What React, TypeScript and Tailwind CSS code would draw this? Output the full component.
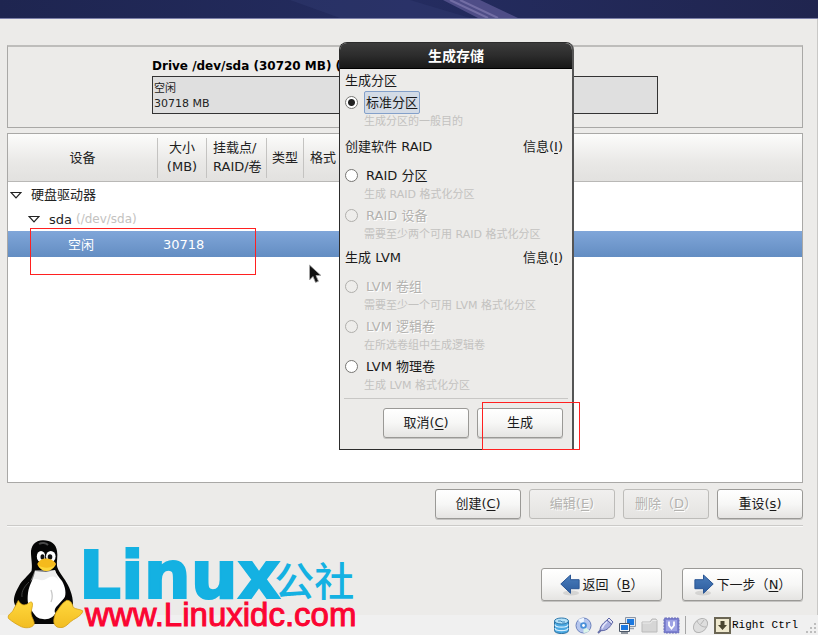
import React from "react";

const FONT = "font-['DejaVu_Sans','Noto_Sans_CJK_SC',sans-serif]";

const BTN =
  "flex items-center justify-center rounded-[3px] border bg-linear-to-b text-[13px] leading-[18px] whitespace-nowrap";
const BTN_ON =
  "border-[#9a9996] from-white via-[#f7f7f6] to-[#e5e4e2] text-[#1a1a1a] shadow-[0_1px_0_#c4c3c1]";
const BTN_OFF =
  "border-[#bdbcb9] from-[#f1f0ef] to-[#e4e3e1] text-[#b3b2af] [text-shadow:1px_1px_0_#fff]";

function Key({ children }: { children: string }) {
  return <span className="underline underline-offset-2">{children}</span>;
}

function ToolButton({ disabled, children }: { disabled?: boolean; children: React.ReactNode }) {
  return (
    <button
      type="button"
      disabled={disabled}
      className={`${BTN} h-[30px] w-[86px] ${disabled ? BTN_OFF : BTN_ON}`}
    >
      <span>{children}</span>
    </button>
  );
}

function Arrow({ flip }: { flip?: boolean }) {
  return (
    <svg width="20" height="22" viewBox="0 0 20 22" className={flip ? "-scale-x-100" : ""} aria-hidden="true">
      <defs>
        <linearGradient id={flip ? "arrowR" : "arrowL"} x1="0" y1="0" x2="0" y2="1">
          <stop offset="0" stopColor="#4a7dbb" />
          <stop offset="1" stopColor="#2c5c9e" />
        </linearGradient>
      </defs>
      <ellipse cx="11" cy="19" rx="8" ry="2.5" fill="#000" opacity=".1" />
      <path
        d="M.8 10 10.5 1v4.700h8.600v9h-8.600v4.600Z"
        fill={flip ? "url(#arrowR)" : "url(#arrowL)"}
        stroke="#2a5694"
        strokeWidth="1"
        strokeLinejoin="round"
      />
    </svg>
  );
}

function Triangle() {
  return (
    <svg width="12" height="8" viewBox="0 0 12 8" className="shrink-0" aria-hidden="true">
      <path d="M1 1.500h10L6 6.800Z" fill="#fff" stroke="#222" strokeWidth="1.200" />
    </svg>
  );
}

type OptionProps = {
  id: string;
  label: string;
  hint: string;
  checked?: boolean;
  disabled?: boolean;
};

function Option({ id, label, hint, checked, disabled }: OptionProps) {
  return (
    <div>
      <div className="flex h-[22px] items-center">
        <input
          id={id}
          type="radio"
          name="storage"
          defaultChecked={checked}
          disabled={disabled}
          className="size-[13px] shrink-0 appearance-none rounded-full border border-[#777673] bg-white checked:bg-[radial-gradient(circle,#222_0_3px,#fff_4px)] disabled:border-[#b0afac] disabled:bg-[#eeedeb]"
        />
        <label
          htmlFor={id}
          className={`ml-[6px] border px-px text-[13px] leading-[21px] ${
            checked ? "rounded-[2px] border-[#83a0ca] bg-[#d3dbe6]" : "border-transparent"
          } ${disabled ? "text-[#b3b2af] [text-shadow:1px_1px_0_#fff]" : "text-[#1a1a1a]"}`}
        >
          {label}
        </label>
      </div>
      <p className="pl-[19px] text-[11px] leading-[18px] text-[#c3c2c0]">{hint}</p>
    </div>
  );
}

function SectionHead({ title, info }: { title: string; info?: boolean }) {
  return (
    <div className="flex justify-between pr-[4px] text-[13px] leading-[18px]">
      <h2>{title}</h2>
      {info && (
        <button type="button" className="leading-[18px]">
          信息(<Key>I</Key>)
        </button>
      )}
    </div>
  );
}

function StorageDialog() {
  return (
    <section
      role="dialog"
      aria-label="生成存储"
      className="absolute top-[42px] left-[339px] w-[235px] rounded-t-[8px] border border-[#2c2c2c] border-r-2 border-r-[#555] bg-[#ecebe9]"
    >
      <h1 className="h-[26px] rounded-t-[7px] border-b border-black bg-linear-to-b from-[#3c3c3c] via-[#2c2c2c] to-[#181818] text-center text-[14px] leading-[26px] font-bold text-white">
        生成存储
      </h1>
      <div className="px-[5px] pt-[3px]">
        <div className="pb-px">
          <SectionHead title="生成分区" />
        </div>
        <Option id="std" label="标准分区" hint="生成分区的一般目的" checked />
        <div className="pt-[7px] pb-[8px]">
          <SectionHead title="创建软件 RAID" info />
        </div>
        <Option id="raidp" label="RAID 分区" hint="生成 RAID 格式化分区" />
        <Option id="raidd" label="RAID 设备" hint="需要至少两个可用 RAID 格式化分区" disabled />
        <div className="pt-[5px] pb-[8px]">
          <SectionHead title="生成 LVM" info />
        </div>
        <Option id="vg" label="LVM 卷组" hint="需要至少一个可用 LVM 格式化分区" disabled />
        <Option id="lv" label="LVM 逻辑卷" hint="在所选卷组中生成逻辑卷" disabled />
        <Option id="pv" label="LVM 物理卷" hint="生成 LVM 格式化分区" />
      </div>
      <div className="mx-[4px] mt-[3px] flex justify-end gap-[8px] border-t border-[#c8c7c5] pt-[9px] pr-[5px] pb-[11px]">
        <ToolButton>
          取消(<Key>C</Key>)
        </ToolButton>
        <ToolButton>生成</ToolButton>
      </div>
    </section>
  );
}

const TH = "border-r border-[#c4c3c1] p-0 text-center font-normal";

function DeviceTable() {
  return (
    <div className="h-[350px] border border-[#a9a8a6] bg-white">
      <table className="w-full table-fixed border-separate border-spacing-0 text-[13px] leading-[19px] text-[#222]">
        <thead>
          <tr className="h-[48px] bg-linear-to-b from-[#fcfcfb] from-0% via-[#e9e8e6] via-60% to-[#e2e1df]">
            <th scope="col" className="w-[150px] border-b border-b-[#b9b8b6] p-0 font-normal">
              <div className={`${TH} flex h-[40px] items-center justify-center`}>设备</div>
            </th>
            <th scope="col" className="w-[49px] border-b border-b-[#b9b8b6] p-0 font-normal">
              <div className={`${TH} h-[40px]`}>大小<br />(MB)</div>
            </th>
            <th scope="col" className="w-[60px] border-b border-b-[#b9b8b6] p-0 font-normal">
              <div className={`${TH} h-[40px] pl-[6px] text-left whitespace-nowrap`}>挂载点/<br />RAID/卷</div>
            </th>
            <th scope="col" className="w-[37px] border-b border-b-[#b9b8b6] p-0 font-normal">
              <div className={`${TH} flex h-[40px] items-center justify-center`}>类型</div>
            </th>
            <th scope="col" className="border-b border-b-[#b9b8b6] p-0 pl-[6px] text-left font-normal">格式</th>
          </tr>
        </thead>
        <tbody>
          <tr className="h-[25px]">
            <td className="p-0" colSpan={5}>
              <span className="flex items-center gap-[9px] pl-[2px]"><Triangle />硬盘驱动器</span>
            </td>
          </tr>
          <tr className="h-[24px]">
            <td className="p-0" colSpan={5}>
              <span className="flex items-center pl-[20px]">
                <Triangle />
                <span className="ml-[9px]">sda</span>
                <span className="ml-[4px] text-[12px] text-[#c3c2c0]">(/dev/sda)</span>
              </span>
            </td>
          </tr>
          <tr className="h-[26px] bg-linear-to-b from-[#80a6d9] to-[#638dc2] text-white">
            <td className="p-0 pl-[60px]">空闲</td>
            <td className="p-0 pl-[5px]">30718</td>
            <td colSpan={3} />
          </tr>
        </tbody>
      </table>
    </div>
  );
}

function Tux() {
  return (
    <svg width="78" height="90" viewBox="0 0 78 90" aria-hidden="true">
      <defs>
        <linearGradient id="foot" x1="0" y1="0" x2="0" y2="1">
          <stop offset="0" stopColor="#ffd83d" />
          <stop offset="1" stopColor="#f2bd22" />
        </linearGradient>
      </defs>
      <path
        d="M36 .3C28 .3 23.500 6 24 14c.5 8 1.500 12 .5 17C21 36 15 40 12 46 9 51 6.500 57 7 62c2 9 10 18 19 22h24c9-3 15-12 16-20 0-9-4-18-8-24-3-5-7-9-8-14-.5-5 1-10 0-15C49 4 44 .3 36 .3Z"
        fill="#060606"
      />
      <path d="M28 31c-1 8-6 13-7 22-1 8 0 14 4 18 3 5 6 8 11 8 6 1 11-2 13-7 3-5 5-8 8-13 3-5 1-13-2-18-3-4-6-7-7-11l-9 2Z" fill="#fff" />
      <path d="M23 42c5-7 10 1 16-3 6-4 10-3 13 2-2-4-3-8-4-11H28Z" fill="#dedede" opacity=".5" />
      <path d="M44 50c1.500 4 2 8 0 12" stroke="#c8c8c8" strokeWidth="1.300" fill="none" />
      <path d="M15 57c-1-6 3-11 7-15" stroke="#555" strokeWidth="1" fill="none" opacity=".7" />
      <path d="M48 73c-1-3 0-5 3-8l9-10 5 6-9 8Z" fill="#060606" />
      <ellipse cx="34" cy="16.500" rx="4.200" ry="5.500" fill="#fff" />
      <ellipse cx="43.800" cy="16.500" rx="4.800" ry="5.500" fill="#fff" />
      <ellipse cx="35.500" cy="17" rx="2" ry="2.800" fill="#111" />
      <ellipse cx="43" cy="17" rx="2.300" ry="2.800" fill="#111" />
      <path d="M30.300 24c2-4 5-5.500 9-5.500 4 0 8.700 2.500 9.700 5.500-1 3.500-6 7-9.400 7-3.600 0-8.600-3.500-9.300-7Z" fill="#f5ba1c" />
      <path d="M31 25c5 3.500 12 3.500 17 0-1 3-5.500 6-8.400 6-3.600 0-7.600-3-8.600-6Z" fill="#fdd63a" />
      <path d="M32 4c3-2 7-1 9 1" stroke="#777" strokeWidth="2" fill="none" opacity=".6" />
      <path
        d="M11.300 60.500c2 3 4 5.500 8 4 3-1.500 5-4 6-1.500.8 3-1 6-1.300 10 .5 5 4 8 3 11.500-2 3.500-8 4-12.500 2.300-4-2-9-4.800-13-8.300-1.500-4 3-5 4.500-8Z"
        fill="url(#foot)"
        stroke="#d49f14"
        strokeWidth=".8"
      />
      <path
        d="M59.700 60.300c4 0 5.500 3 6.500 7 2 2 7.500 2 9.500 3.500 0 3-4 6-9.500 9-4 2.500-6 6-10 7.500-3 .5-6 .3-7.500-1.300-3-3-2-8 0-13 3-4 6-10 11-12.700Z"
        fill="url(#foot)"
        stroke="#d49f14"
        strokeWidth=".8"
      />
    </svg>
  );
}

function Watermark() {
  return (
    <div className="flex items-start">
      <Tux />
      <div className="whitespace-nowrap">
        <div className="-ml-[6px] flex h-[60px] items-start text-[#14b1e2]">
          <span className="text-[66px] leading-[72px] font-bold [-webkit-text-stroke:2px_#14b1e2]">Linux</span>
          <span className="-ml-[6px] pt-[16px] text-[40px] leading-[52px] font-medium">公社</span>
        </div>
        <div className="font-['Liberation_Sans',sans-serif] text-[33px] leading-[30px] text-[#fb0532] [-webkit-text-stroke:1px_#fb0532]">
          www.Linuxidc.com
        </div>
      </div>
    </div>
  );
}

function StatusIcons() {
  return (
    <div className="flex items-center gap-[5px]">
      <svg width="17" height="17" viewBox="0 0 17 17" aria-hidden="true">
        <path d="M1.500 4v9.500c0 4 14 4 14 0V4" fill="#4ba9e2" stroke="#2a6f9f" />
        <path d="M2 7.500c0 3.500 13 3.500 13 0M2 11c0 3.500 13 3.500 13 0" stroke="#d6efff" fill="none" strokeWidth="1.200" />
        <ellipse cx="8.500" cy="4" rx="7" ry="3" fill="#b6e2f8" stroke="#2b78ad" />
        <path d="M5 4h3l1 1h3" stroke="#3a86bb" fill="none" />
      </svg>
      <svg width="17" height="17" viewBox="0 0 17 17" aria-hidden="true">
        <circle cx="8.500" cy="8.500" r="7.500" fill="#b5c6ee" stroke="#6c82bd" />
        <path d="M8.500 8.500 3 3a8 8 0 0 1 6-2Z" fill="#eef6ff" />
        <path d="m8.500 8.500 6 5a8 8 0 0 1-6 2.500Z" fill="#dcf5ea" />
        <circle cx="8.500" cy="8.500" r="3.300" fill="#4a90d9" />
        <circle cx="8.500" cy="8.500" r="1.400" fill="#fff" />
      </svg>
      <svg width="17" height="17" viewBox="0 0 17 17" aria-hidden="true">
        <path d="m1 16 3-3" stroke="#666fa8" strokeWidth="2" />
        <path d="M3 13.500C3 8 8 5 10 3l4.500 4c-2 4-6 7.500-11.500 6.500Z" fill="#a8afe0" stroke="#5e66a6" />
        <path d="M5 11.500c1-3 3-5 5-6.500" stroke="#e6e8fb" strokeWidth="1.500" fill="none" />
        <path d="m10 3 2-2 4 4-1.500 2Z" fill="#e4e6f8" stroke="#5e66a6" />
      </svg>
      <svg width="17" height="17" viewBox="0 0 17 17" aria-hidden="true">
        <path d="M6.500.5h10v9h-10Z" fill="#e4e8ee" stroke="#8a95a5" />
        <path d="M8 2h7v6H8Z" fill="#1b78e0" />
        <path d="M10 11.500h5" stroke="#9aa3b0" strokeWidth="1.500" />
        <path d="M.5 6.500h10v8H.5Z" fill="#f4f6f8" stroke="#4a5666" />
        <path d="M2 8h7v5H2Z" fill="#1b78e0" />
        <path d="M2 16h7" stroke="#4a5666" strokeWidth="1.200" />
      </svg>
      <svg width="17" height="17" viewBox="0 0 17 17" aria-hidden="true">
        <path d="M1 5h8l2-3h4l1 1.500V15H1Z" fill="#d6d6d6" stroke="#bababa" />
        <path d="M1.500 6h8l2-2.500h4" stroke="#ececec" fill="none" />
      </svg>
      <svg width="17" height="17" viewBox="0 0 17 17" aria-hidden="true">
        <rect x="1" y="1" width="15" height="15" rx="1" fill="#7c80cf" stroke="#6468b4" strokeDasharray="2 1" />
        <rect x="3" y="3" width="11" height="11" fill="#9da1e4" />
        <path d="M6 4.500v4l2.500 3 2.500-3v-4" fill="none" stroke="#fff" strokeWidth="1.800" />
      </svg>
      <span className="mr-[1px] h-[18px] w-px bg-[#a5a5a5]" />
      <svg width="17" height="17" viewBox="0 0 17 17" aria-hidden="true">
        <ellipse cx="8.500" cy="8.500" rx="6" ry="8" transform="rotate(45 8.500 8.500)" fill="#dedede" stroke="#b4b4b4" />
        <path d="M5 4c2 4 5 6 9 6M8.500 7.500 12 3" stroke="#b4b4b4" fill="none" />
      </svg>
      <svg width="17" height="17" viewBox="0 0 17 17" aria-hidden="true">
        <rect x="1" y="1" width="15" height="15" fill="#efe9cf" stroke="#6b6654" strokeWidth="2" />
        <path d="M6.500 4h4v4H13l-4.500 5L4 8h2.500Z" fill="#4a452f" />
      </svg>
    </div>
  );
}

function Banner() {
  return (
    <header className="h-[19px] border-b border-[#7b7fa8] bg-linear-to-r from-[#1e2550] via-[#242c60] to-[#20254f]">
      <svg width="100%" height="18" viewBox="0 0 818 18" preserveAspectRatio="none" className="block" aria-hidden="true">
        <path d="M290 0h120l60 18H340Z" fill="#39427a" opacity=".3" />
        <path d="M443 0h37l38 18h-40Z" fill="#5d5a95" opacity=".75" />
        <path d="m450 0 38 18M460 0l38 18" stroke="#8a83b8" strokeWidth="2" opacity=".6" />
      </svg>
    </header>
  );
}

export default function App() {
  return (
    <div className={`relative flex min-h-screen flex-col bg-[#ecebe9] text-[#1a1a1a] ${FONT}`}>
      <Banner />
      <main className="flex flex-1 flex-col border-r border-[#c9c8c6] pt-[26px] pr-[14px] pl-[7px]">
        <section className="h-[83px] border border-t-2 border-[#a9a8a6] border-t-[#bebdbb] pt-[10px] pl-[144px]">
          <h2 className="text-[12px] leading-[18px] font-bold text-black">Drive /dev/sda (30720 MB) (型号：ATA)</h2>
          <div className="mt-px mr-[144px] h-[38px] border border-[#333] bg-[#dfdfdf] pt-[4px] pl-px text-[11px] leading-[15px] text-[#222]">
            <div>空闲</div>
            <div>30718 MB</div>
          </div>
        </section>
        <div className="mt-[5px]">
          <DeviceTable />
        </div>
        <div className="mt-[6px] flex justify-end gap-[8px]">
          <ToolButton>创建(<Key>C</Key>)</ToolButton>
          <ToolButton disabled>编辑(<Key>E</Key>)</ToolButton>
          <ToolButton disabled>删除（<Key>D</Key>）</ToolButton>
          <ToolButton>重设(<Key>s</Key>)</ToolButton>
        </div>
        <div className="mt-[6px] h-[2px] border-t border-[#cbcac8] bg-[#f8f8f7]" />
        <div className="flex justify-end gap-[20px] pt-[41px]">
          <button type="button" className={`${BTN} ${BTN_ON} h-[33px] w-[121px] gap-[3px]`}>
            <Arrow />
            <span>返回（<Key>B</Key>）</span>
          </button>
          <button type="button" className={`${BTN} ${BTN_ON} h-[33px] w-[121px] gap-[3px]`}>
            <Arrow flip />
            <span>下一步（<Key>N</Key>）</span>
          </button>
        </div>
      </main>
      <footer className="flex h-[20px] items-center justify-end gap-px bg-[#f0f0f0]">
        <StatusIcons />
        <span className="font-['Liberation_Mono',monospace] text-[11px] text-black">Right Ctrl</span>
        <svg width="19" height="20" viewBox="0 0 19 20" aria-hidden="true">
          <path d="M15 8h2v2h-2zM15 12h2v2h-2zM11 12h2v2h-2zM15 16h2v2h-2zM11 16h2v2h-2zM7 16h2v2H7z" fill="#bdbdbd" />
        </svg>
      </footer>

      <StorageDialog />
      <div className="pointer-events-none absolute top-[228px] left-[30px] h-[47px] w-[226px] border border-[#ff2020]" />
      <div className="pointer-events-none absolute top-[402px] left-[482px] h-[48px] w-[98px] border border-[#ff2020]" />
      <svg className="absolute top-[264px] left-[308px]" width="14" height="20" viewBox="0 0 14 20" aria-hidden="true">
        <path d="M1.500 1v15l3.500-3.500 2.500 6 3-1.200-2.500-5.800h5Z" fill="#111" stroke="#aaa" strokeWidth=".8" />
      </svg>
      <div className="absolute top-[540px] left-[7px]">
        <Watermark />
      </div>
    </div>
  );
}
